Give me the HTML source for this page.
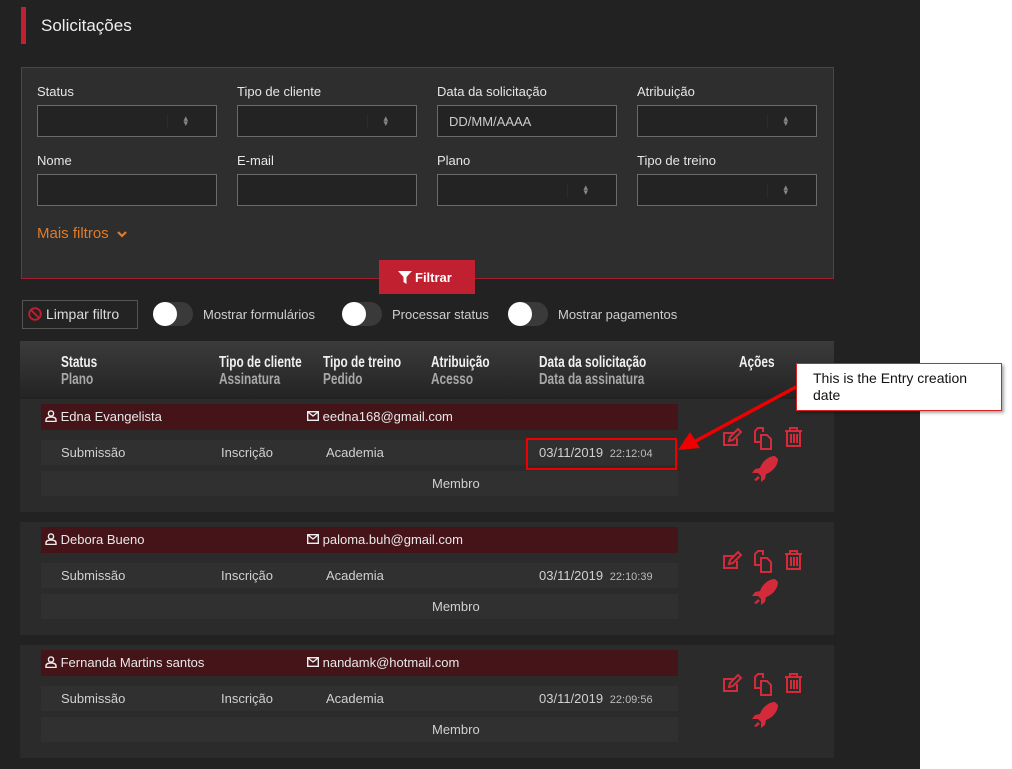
<!DOCTYPE html>
<html><head><meta charset="utf-8"><style>
*{box-sizing:border-box;margin:0;padding:0}
body{width:1012px;height:769px;background:#fff;font-family:"Liberation Sans",sans-serif;position:relative;overflow:hidden}
.bg{position:absolute;left:0;top:0;width:920px;height:769px;background:#222}
.a{position:absolute}
.lbl{color:#e6e6e6;font-size:13px}
.inp{position:absolute;width:180px;height:32px;border:1px solid #6a6a6a;background:#232323}
.arr{position:absolute;right:28px;top:10px;color:#888;font-size:9px;line-height:5px}
.sep{position:absolute;right:48px;top:8px;width:1px;height:15px;background:#2c2c2c}
.tg{position:absolute;width:40px;height:24px;border-radius:12px;background:#3a3a3a}
.tg:before{content:"";position:absolute;left:0;top:0;width:24px;height:24px;border-radius:12px;background:#fff}
.tl{color:#cfcfcf;font-size:13px;position:absolute}
.hd{position:absolute;font-weight:bold;font-size:16px;line-height:17px;color:#f0f0f0;transform:scaleX(0.74);transform-origin:0 0;white-space:nowrap}
.hd span{display:block;color:#a8a8a8}
.card{position:absolute;left:20px;width:814px;height:113px;background:#2b2b2b}
.nb{position:absolute;left:21px;top:5px;width:637px;height:26px;background:#451419;color:#e8e8e8;font-size:13px}
.r2{position:absolute;left:21px;top:41px;width:637px;height:25px;background:#303030;color:#d0d0d0;font-size:13px}
.r3{position:absolute;left:21px;top:72px;width:637px;height:25px;background:#303030;color:#d0d0d0;font-size:13px}
.t{position:absolute;top:5px}
</style></head><body>
<div class="bg"></div>
<div class="a" style="left:21px;top:7px;width:5px;height:37px;background:#c0202f"></div>
<div class="a" style="left:41px;top:16px;color:#eee;font-size:17px">Solicitações</div>

<div class="a" style="left:21px;top:67px;width:813px;height:212px;background:#2e2e2e;border:1px solid #a0202c"></div>
<div class="a lbl" style="left:37px;top:84px">Status</div>
<div class="a lbl" style="left:237px;top:84px">Tipo de cliente</div>
<div class="a lbl" style="left:437px;top:84px">Data da solicitação</div>
<div class="a lbl" style="left:637px;top:84px">Atribuição</div>
<div class="inp" style="left:37px;top:105px"><div class="sep"></div><div class="arr">▴<br>▾</div></div>
<div class="inp" style="left:237px;top:105px"><div class="sep"></div><div class="arr">▴<br>▾</div></div>
<div class="inp" style="left:437px;top:105px;color:#ccc;font-size:13px;padding:8px 11px">DD/MM/AAAA</div>
<div class="inp" style="left:637px;top:105px"><div class="sep"></div><div class="arr">▴<br>▾</div></div>
<div class="a lbl" style="left:37px;top:153px">Nome</div>
<div class="a lbl" style="left:237px;top:153px">E-mail</div>
<div class="a lbl" style="left:437px;top:153px">Plano</div>
<div class="a lbl" style="left:637px;top:153px">Tipo de treino</div>
<div class="inp" style="left:37px;top:174px"></div>
<div class="inp" style="left:237px;top:174px"></div>
<div class="inp" style="left:437px;top:174px"><div class="sep"></div><div class="arr">▴<br>▾</div></div>
<div class="inp" style="left:637px;top:174px"><div class="sep"></div><div class="arr">▴<br>▾</div></div>
<div class="a" style="left:37px;top:225px;color:#e07b2a;font-size:15px">Mais filtros <svg width="12" height="8" viewBox="0 0 12 8" style="margin-left:3px"><path d="M2 2l4 4 4-4" stroke="#e07b2a" stroke-width="2.2" fill="none"/></svg></div>
<div class="a" style="left:379px;top:260px;width:96px;height:34px;background:#c0202f;color:#fff;font-size:13px;font-weight:bold;padding-top:10px;padding-left:19px"><svg width="14" height="14" viewBox="0 0 14 14" style="vertical-align:-2px;margin-right:3px"><path d="M0 1h14L8.5 7v7L5.5 12V7z" fill="#fff"/></svg>Filtrar</div>

<div class="a" style="left:22px;top:300px;width:116px;height:29px;border:1px solid #555;background:#232323;color:#ddd;font-size:14px;padding:5px 0 0 5px"><svg width="14" height="14" viewBox="0 0 14 14" style="vertical-align:-2px;margin-right:4px"><circle cx="7" cy="7" r="5.8" stroke="#c0202f" stroke-width="1.8" fill="none"/><path d="M3 3l8 8" stroke="#c0202f" stroke-width="1.8"/></svg>Limpar filtro</div>
<div class="tg" style="left:153px;top:302px"></div><div class="tl" style="left:203px;top:307px">Mostrar formulários</div>
<div class="tg" style="left:342px;top:302px"></div><div class="tl" style="left:392px;top:307px">Processar status</div>
<div class="tg" style="left:508px;top:302px"></div><div class="tl" style="left:558px;top:307px">Mostrar pagamentos</div>

<div class="a" style="left:20px;top:341px;width:814px;height:56px;background:linear-gradient(#3b3b3b,#242424)"></div>
<div class="hd" style="left:61px;top:354px">Status<span>Plano</span></div>
<div class="hd" style="left:219px;top:354px">Tipo de cliente<span>Assinatura</span></div>
<div class="hd" style="left:323px;top:354px">Tipo de treino<span>Pedido</span></div>
<div class="hd" style="left:431px;top:354px">Atribuição<span>Acesso</span></div>
<div class="hd" style="left:539px;top:354px">Data da solicitação<span>Data da assinatura</span></div>
<div class="hd" style="left:739px;top:354px">Ações</div>

<div class="card" style="top:399px">
<div class="nb"><div class="t" style="left:4px"><svg width="12" height="12" viewBox="0 0 12 12" style="vertical-align:-1px"><circle cx="6" cy="3.5" r="2.6" stroke="#eee" stroke-width="1.4" fill="none"/><path d="M1 11.5v-1.5c0-2 2-3 5-3s5 1 5 3v1.5z" stroke="#eee" stroke-width="1.4" fill="none"/></svg> Edna Evangelista</div><div class="t" style="left:266px"><svg width="12" height="10" viewBox="0 0 12 10"><rect x=".7" y=".7" width="10.6" height="8.6" stroke="#eee" stroke-width="1.4" fill="none"/><path d="M1 1l5 4 5-4" stroke="#eee" stroke-width="1.4" fill="none"/></svg> eedna168@gmail.com</div></div>
<div class="r2"><div class="t" style="left:20px">Submissão</div><div class="t" style="left:180px">Inscrição</div><div class="t" style="left:285px">Academia</div><div class="t" style="left:498px">03/11/2019 <span style="font-size:11px;color:#bbb">&nbsp;22:12:04</span></div></div>
<div class="r3"><div class="t" style="left:391px">Membro</div></div>
</div>
<div class="card" style="top:522px">
<div class="nb"><div class="t" style="left:4px"><svg width="12" height="12" viewBox="0 0 12 12" style="vertical-align:-1px"><circle cx="6" cy="3.5" r="2.6" stroke="#eee" stroke-width="1.4" fill="none"/><path d="M1 11.5v-1.5c0-2 2-3 5-3s5 1 5 3v1.5z" stroke="#eee" stroke-width="1.4" fill="none"/></svg> Debora Bueno</div><div class="t" style="left:266px"><svg width="12" height="10" viewBox="0 0 12 10"><rect x=".7" y=".7" width="10.6" height="8.6" stroke="#eee" stroke-width="1.4" fill="none"/><path d="M1 1l5 4 5-4" stroke="#eee" stroke-width="1.4" fill="none"/></svg> paloma.buh@gmail.com</div></div>
<div class="r2"><div class="t" style="left:20px">Submissão</div><div class="t" style="left:180px">Inscrição</div><div class="t" style="left:285px">Academia</div><div class="t" style="left:498px">03/11/2019 <span style="font-size:11px;color:#bbb">&nbsp;22:10:39</span></div></div>
<div class="r3"><div class="t" style="left:391px">Membro</div></div>
</div>
<div class="card" style="top:645px">
<div class="nb"><div class="t" style="left:4px"><svg width="12" height="12" viewBox="0 0 12 12" style="vertical-align:-1px"><circle cx="6" cy="3.5" r="2.6" stroke="#eee" stroke-width="1.4" fill="none"/><path d="M1 11.5v-1.5c0-2 2-3 5-3s5 1 5 3v1.5z" stroke="#eee" stroke-width="1.4" fill="none"/></svg> Fernanda Martins santos</div><div class="t" style="left:266px"><svg width="12" height="10" viewBox="0 0 12 10"><rect x=".7" y=".7" width="10.6" height="8.6" stroke="#eee" stroke-width="1.4" fill="none"/><path d="M1 1l5 4 5-4" stroke="#eee" stroke-width="1.4" fill="none"/></svg> nandamk@hotmail.com</div></div>
<div class="r2"><div class="t" style="left:20px">Submissão</div><div class="t" style="left:180px">Inscrição</div><div class="t" style="left:285px">Academia</div><div class="t" style="left:498px">03/11/2019 <span style="font-size:11px;color:#bbb">&nbsp;22:09:56</span></div></div>
<div class="r3"><div class="t" style="left:391px">Membro</div></div>
</div>

<svg width="0" height="0" style="position:absolute"><defs><g id="ic">
<g fill="none" stroke="#d42a3a" stroke-width="2">
<path d="M14 10H4v12h13V15"/><path d="M9 18l1-4 8-8 3 3-8 8z"/>
<path d="M41 19h-6V8l3-3h5v4"/><path d="M41 12h6l4 4v10H41z"/>
<path d="M65 8h17M70 8V5h7v3M67 8v15h13V8M71 11v9M74 11v9M77 11v9"/>
</g>
<path d="M55 33c-7 0-13 6-15 12l-5 1-3 4 6 0 3 3 0 6 4-3 1-5c6-2 12-8 12-15z M34 57l4-4 2 2-4 3z" fill="#d42a3a"/>
</g></defs></svg>
<svg class="a" style="left:720px;top:423px" width="90" height="60" viewBox="0 0 90 60"><use href="#ic"/></svg>
<svg class="a" style="left:720px;top:546px" width="90" height="60" viewBox="0 0 90 60"><use href="#ic"/></svg>
<svg class="a" style="left:720px;top:669px" width="90" height="60" viewBox="0 0 90 60"><use href="#ic"/></svg>

<div class="a" style="left:526px;top:438px;width:151px;height:32px;border:2px solid #e00"></div>
<svg class="a" style="left:670px;top:380px" width="130" height="80" viewBox="0 0 130 80"><path d="M126 7L22 63" stroke="#e00" stroke-width="3.5"/><path d="M8 70L20 52 30 68z" fill="#e00"/></svg>
<div class="a" style="left:796px;top:363px;width:206px;height:48px;background:#fff;border:1px solid #d22;box-shadow:2px 2px 3px rgba(0,0,0,.35);font-size:14px;line-height:17px;color:#111;padding:6px 0 0 16px"><div style="width:172px">This is the Entry creation date</div></div>
</body></html>
